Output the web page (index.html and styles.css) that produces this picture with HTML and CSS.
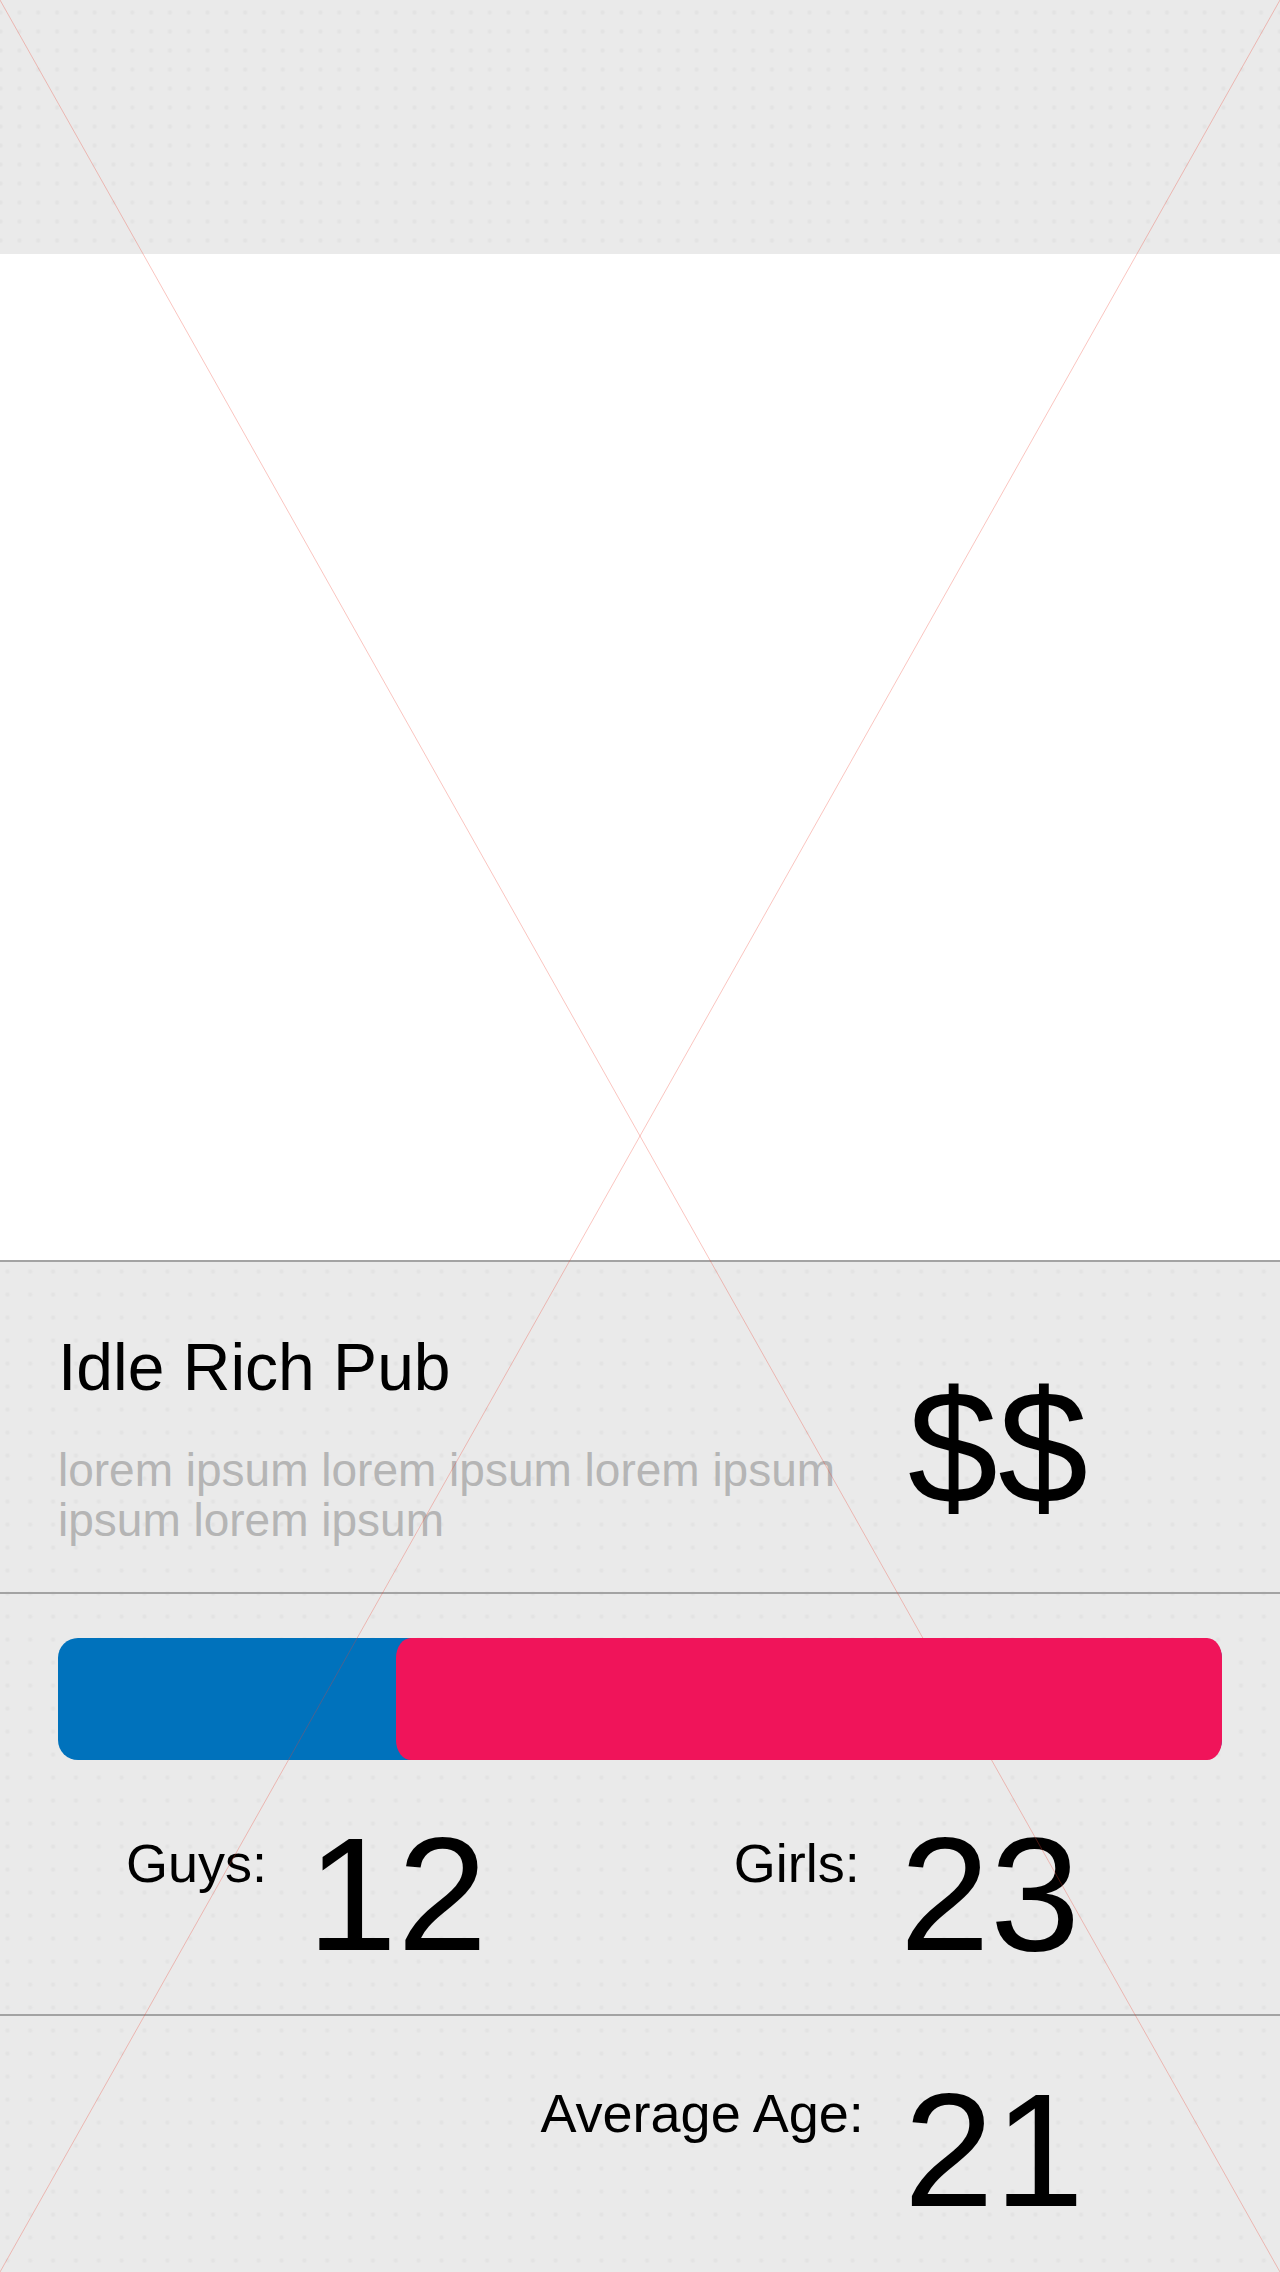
FILE: index.html
```html
<!DOCTYPE html>
<html lang="en">
<head>
<meta charset="utf-8">
<meta name="viewport" content="width=device-width, initial-scale=1">
<title>Idle Rich Pub</title>
<link rel="stylesheet" href="styles.css">
</head>
<body>
<div class="screen">
  <header class="topbar"></header>
  <div class="photo"></div>
  <main class="details">
    <section class="panel venue">
      <div class="venue-text">
        <h1 class="venue-name">Idle Rich Pub</h1>
        <p class="venue-about">lorem ipsum lorem ipsum lorem ipsum ipsum lorem ipsum</p>
      </div>
      <p class="value">$$</p>
    </section>
    <section class="panel crowd">
      <div class="ratio">
        <div class="ratio-girls" style="width: 71%"></div>
      </div>
      <dl class="stats">
        <div class="stat">
          <dt class="label">Guys:</dt>
          <dd class="value">12</dd>
        </div>
        <div class="stat">
          <dt class="label">Girls:</dt>
          <dd class="value">23</dd>
        </div>
      </dl>
    </section>
    <section class="panel age">
      <dl class="stats stats-end">
        <div class="stat">
          <dt class="label">Average Age:</dt>
          <dd class="value">21</dd>
        </div>
      </dl>
    </section>
  </main>
  <svg class="guides" viewBox="0 0 100 100" preserveAspectRatio="none" aria-hidden="true">
    <path d="M0 0L100 100M100 0L0 100" vector-effect="non-scaling-stroke"/>
  </svg>
</div>
</body>
</html>
```
FILE: styles.css
```css
* {
  box-sizing: border-box;
  margin: 0;
}

body {
  background: #fff;
  color: #000;
  font-family: "Liberation Sans", Arial, sans-serif;
}

.screen {
  position: relative;
  display: flex;
  flex-direction: column;
  min-height: 100vh;
}

.topbar,
.details {
  background-color: #eaeaea;
  background-image: radial-gradient(circle, #e3e3e3 1px, transparent 3px);
}

.topbar {
  height: 254px;
  background-size: calc(100% / 68) 19px;
  background-position: 10px 3px;
}

.photo {
  flex: 1;
}

.details {
  background-size: calc(100% / 56) 23px;
  background-position: -4px 0;
}

.panel {
  border-top: 2px solid #a3a3a3;
}

.venue {
  display: flex;
  justify-content: space-between;
  padding: 65px 192px 47px 58px;
}

.venue-text {
  flex: 0 1 790px;
}

.venue-name {
  margin-bottom: 38px;
  font-size: 66px;
  font-weight: 400;
  line-height: 80px;
}

.venue-about {
  color: #b5b5b5;
  font-size: 46px;
  line-height: 50px;
}

.value {
  font-size: 162px;
  line-height: 160px;
}

.venue .value {
  align-self: center;
  padding-top: 22px;
}

.crowd {
  padding: 44px 58px 40px;
}

.ratio {
  display: flex;
  justify-content: flex-end;
  height: 122px;
  border-radius: 20px;
  background: #0072bc;
}

.ratio-girls {
  position: relative;
  z-index: 2;
  border-radius: 15px / 20px;
  background: #f0145a;
}

.stats {
  display: flex;
  justify-content: space-between;
  padding: 54px 142px 0 68px;
}

.stats-end {
  justify-content: flex-end;
  padding-right: 138px;
}

.stat {
  display: flex;
  gap: 40px;
}

.label {
  padding-top: 19px;
  font-size: 54px;
  line-height: 60px;
}

.age {
  padding: 0 58px 42px;
}

.age .label {
  padding-top: 13px;
}

/* Corner-to-corner guide lines drawn over the whole screen */
.guides {
  position: absolute;
  z-index: 1;
  inset: 0;
  width: 100%;
  height: 100%;
  pointer-events: none;
}

.guides path {
  fill: none;
  stroke: #f04030;
  stroke-opacity: 0.3;
  stroke-width: 1px;
}
```
